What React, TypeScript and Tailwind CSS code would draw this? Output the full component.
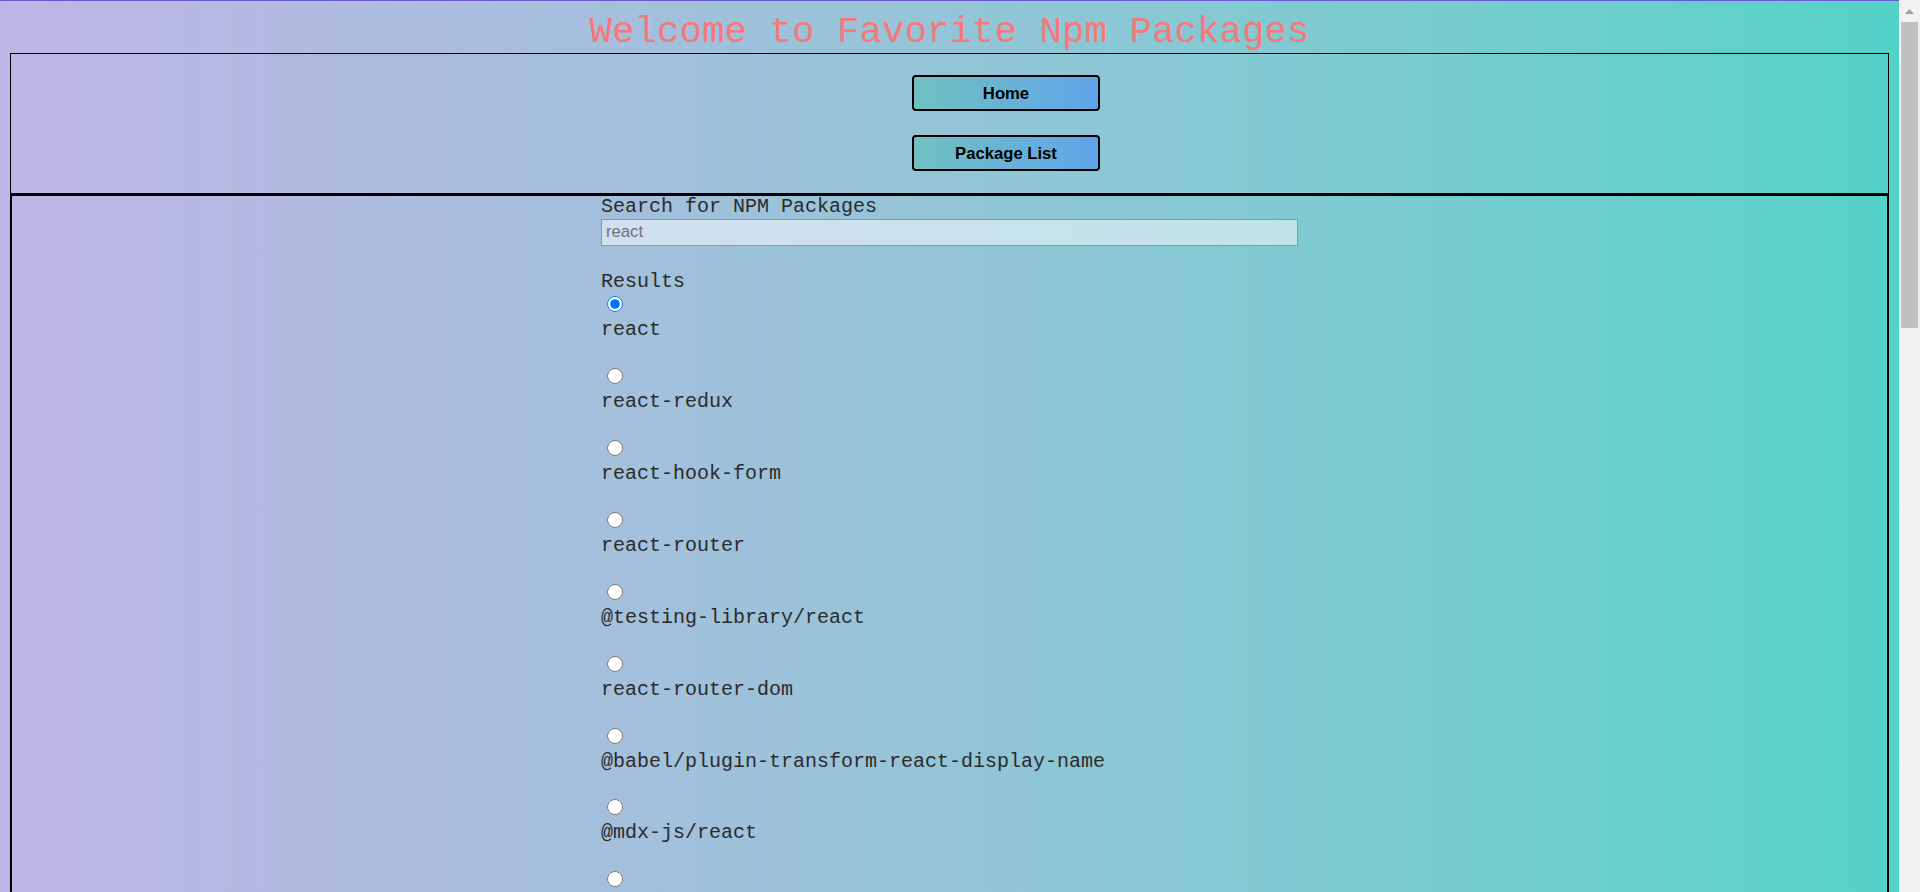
import React, { useState } from 'react';

const RESULTS = [
  'react',
  'react-redux',
  'react-hook-form',
  'react-router',
  '@testing-library/react',
  'react-router-dom',
  '@babel/plugin-transform-react-display-name',
  '@mdx-js/react',
  'react-dom',
];

const mono = { fontFamily: '"Liberation Mono", "Courier New", monospace' };

const NavButton: React.FC<{ label: string }> = ({ label }) => (
  <button
    className="w-[188px] h-[36px] rounded-[4px] border-[2.5px] border-black bg-gradient-to-r from-[#70c1c0] to-[#62a3ea] text-[16.67px] font-bold text-black font-['Liberation_Sans',Arial,sans-serif]"
  >
    {label}
  </button>
);

// Fake window scrollbar, the screenshot was taken with one showing
const Scrollbar: React.FC = () => (
  <div className="w-[21px] shrink-0 bg-[#f1f1f1] flex flex-col items-center">
    <div className="h-[22px] w-full flex items-center justify-center">
      <svg width="9" height="5" viewBox="0 0 9 5">
        <path d="M4.5 0 L9 5 L0 5 Z" fill="#a3a3a3" />
      </svg>
    </div>
    <div className="w-[17px] h-[306px] bg-[#c1c1c1]" />
  </div>
);

const App: React.FC = () => {
  const [query, setQuery] = useState('react');
  const [selected, setSelected] = useState('react');

  return (
    <div className="flex h-[892px] w-full overflow-hidden">
      <div className="flex-1 flex flex-col border-t border-[#6a5acd] px-[10px] bg-gradient-to-r from-[#beb5e6] to-[#53d2c8]">
        <h1
          className="mt-[9.5px] text-center text-[37.5px] leading-[42.5px] font-normal text-[#f7787a]"
          style={mono}
        >
          Welcome to Favorite Npm Packages
        </h1>

        <nav className="border border-black flex flex-col items-center gap-[24px] pt-[21px] pb-[22px] pl-[113px]">
          <NavButton label="Home" />
          <NavButton label="Package List" />
        </nav>

        <main className="flex-1 border-2 border-black border-b-0">
          <div className="w-[697px] mx-auto flex flex-col text-[20px] text-[#2b2b2b]" style={mono}>
            <label htmlFor="search" className="leading-[22.67px]">
              Search for NPM Packages
            </label>
            <input
              id="search"
              type="text"
              value={query}
              onChange={(e) => setQuery(e.target.value)}
              className="h-[27px] w-full border border-[#7d9cae] bg-white/50 px-[4px] text-[16.67px] text-[#6f7479] outline-none font-['Liberation_Sans',Arial,sans-serif]"
            />

            <div className="mt-[25px] leading-[22.67px]">Results</div>
            {RESULTS.map((name) => (
              <div key={name} className="flex flex-col mb-[23.2px]">
                <div className="h-[26px] pt-[3px]">
                  <input
                    type="radio"
                    name="pkg"
                    checked={selected === name}
                    onChange={() => setSelected(name)}
                    className="m-0 ml-[6px] w-[16px] h-[16px] align-top"
                  />
                </div>
                <div className="leading-[22.67px]">{name}</div>
              </div>
            ))}
          </div>
        </main>
      </div>
      <Scrollbar />
    </div>
  );
};

export default App;
